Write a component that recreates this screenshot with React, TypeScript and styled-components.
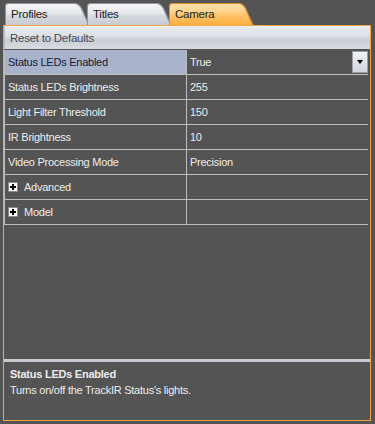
import React from "react";
import styled, { createGlobalStyle, css } from "styled-components";

const Global = createGlobalStyle`
  html, body { margin: 0; padding: 0; background: #545454; }
  body { font-family: "Liberation Sans", Arial, sans-serif; font-size: 11px; letter-spacing: -0.25px; }
  * { box-sizing: border-box; }
`;

const Window = styled.div`
  width: 375px;
  height: 424px;
  background: #545454;
  display: flex;
  flex-direction: column;
  overflow: hidden;
`;

const TabStrip = styled.div`
  display: flex;
  height: 25px;
  padding: 3px 0 0 5px;
`;

const OUTER = "path('M0 22 V3 Q0 0 3 0 H70 Q74 0 77 5 L84.5 22 Z')";
const INNER = "path('M1 22 V3.5 Q1 1 3.5 1 H69.5 Q73 1 75.8 5.6 L83 22 Z')";

const Tab = styled.div<{ $active?: boolean }>`
  position: relative;
  width: 85px;
  height: 22px;
  margin-right: -3px;
  clip-path: ${OUTER};
  background: ${(p) => (p.$active ? "#d9902e" : "#8f959b")};
  color: #1a1a1a;
  font-size: 11.5px;
  &::before {
    content: "";
    position: absolute;
    inset: 0;
    clip-path: ${INNER};
    background: ${(p) =>
      p.$active
        ? "linear-gradient(#ffe2b0 0%, #ffd38c 40%, #ffc065 60%, #ffae3f 100%)"
        : "linear-gradient(#f5f6f7 0%, #e6e8eb 45%, #d5d9de 60%, #c8ccd2 100%)"};
  }
`;

const TabLabel = styled.span`
  position: relative;
  display: block;
  padding: 4px 0 0 6px;
  line-height: 14px;
`;

const Panel = styled.div`
  margin-left: 3px;
  width: 368px;
  height: 396px;
  border: 1px solid #f2a447;
  display: flex;
  flex-direction: column;
  background: #545454;
`;

const Toolbar = styled.div`
  height: 23px;
  display: flex;
  align-items: center;
  padding-left: 5px;
  color: #464e5a;
  font-size: 11.5px;
  border-top: 1px solid #eef0f2;
  border-left: 1px solid #b6bbc1;
  background: linear-gradient(#e8ebee 0%, #dde0e4 40%, #c9cdd3 60%, #d9dce0 100%);
`;

const Grid = styled.div`
  margin-top: 1px;
  margin-right: 2px;
  border-left: 1px solid #bdbdbd;
  display: flex;
  flex-direction: column;
`;

const Row = styled.div`
  display: grid;
  grid-template-columns: 181px 1px 181px;
  height: 25px;
  border-bottom: 1px solid #bdbdbd;
`;

const Divider = styled.div`
  background: #bdbdbd;
`;

const Cell = styled.div<{ $selected?: boolean }>`
  display: flex;
  align-items: center;
  padding-left: 3px;
  color: #ececec;
  font-size: 11px;
  height: 24px;
  ${(p) =>
    p.$selected &&
    css`
      background: #a9b3cc;
      color: #14203a;
    `}
`;

const GroupCell = styled(Cell)`
  padding-left: 3px;
  gap: 6px;
`;

const ValueCell = styled(Cell)`
  justify-content: space-between;
`;

const Expander = styled.span`
  width: 10px;
  height: 10px;
  background: #fafafa;
  border: 1px solid #8a8a8a;
  position: relative;
  &::before, &::after {
    content: "";
    position: absolute;
    background: #000;
  }
  &::before { left: 1px; right: 1px; top: 3px; height: 2px; }
  &::after { top: 1px; bottom: 1px; left: 3px; width: 2px; }
`;

const DropButton = styled.div`
  width: 16px;
  height: 22px;
  border: 1px solid #9aa0a6;
  background: linear-gradient(#f2f3f5, #dfe2e6 50%, #d3d7dc);
  display: flex;
  align-items: center;
  justify-content: center;
  &::after {
    content: "";
    border-left: 3.5px solid transparent;
    border-right: 3.5px solid transparent;
    border-top: 4px solid #000;
  }
`;

const Spacer = styled.div`
  flex: 1;
`;

const Separator = styled.div`
  height: 3px;
  background: #c7cbd1;
`;

const Description = styled.div`
  height: 58px;
  padding: 4px 0 0 6px;
  color: #ececec;
  line-height: 16px;
  font-size: 11px;
`;

const DescTitle = styled.div`
  font-weight: bold;
`;

type Prop = { label: string; value?: string; group?: boolean; selected?: boolean; dropdown?: boolean };

const props: Prop[] = [
  { label: "Status LEDs Enabled", value: "True", selected: true, dropdown: true },
  { label: "Status LEDs Brightness", value: "255" },
  { label: "Light Filter Threshold", value: "150" },
  { label: "IR Brightness", value: "10" },
  { label: "Video Processing Mode", value: "Precision" },
  { label: "Advanced", group: true },
  { label: "Model", group: true },
];

export default function App() {
  return (
    <Window>
      <Global />
      <TabStrip>
        <Tab><TabLabel>Profiles</TabLabel></Tab>
        <Tab><TabLabel>Titles</TabLabel></Tab>
        <Tab $active><TabLabel>Camera</TabLabel></Tab>
      </TabStrip>
      <Panel>
        <Toolbar>Reset to Defaults</Toolbar>
        <Grid>
          {props.map((p) => (
            <Row key={p.label}>
              {p.group ? (
                <GroupCell>
                  <Expander />
                  {p.label}
                </GroupCell>
              ) : (
                <Cell $selected={p.selected}>{p.label}</Cell>
              )}
              <Divider />
              <ValueCell>
                {p.value ?? ""}
                {p.dropdown && <DropButton />}
              </ValueCell>
            </Row>
          ))}
        </Grid>
        <Spacer />
        <Separator />
        <Description>
          <DescTitle>Status LEDs Enabled</DescTitle>
          <div>Turns on/off the TrackIR Status's lights.</div>
        </Description>
      </Panel>
    </Window>
  );
}
